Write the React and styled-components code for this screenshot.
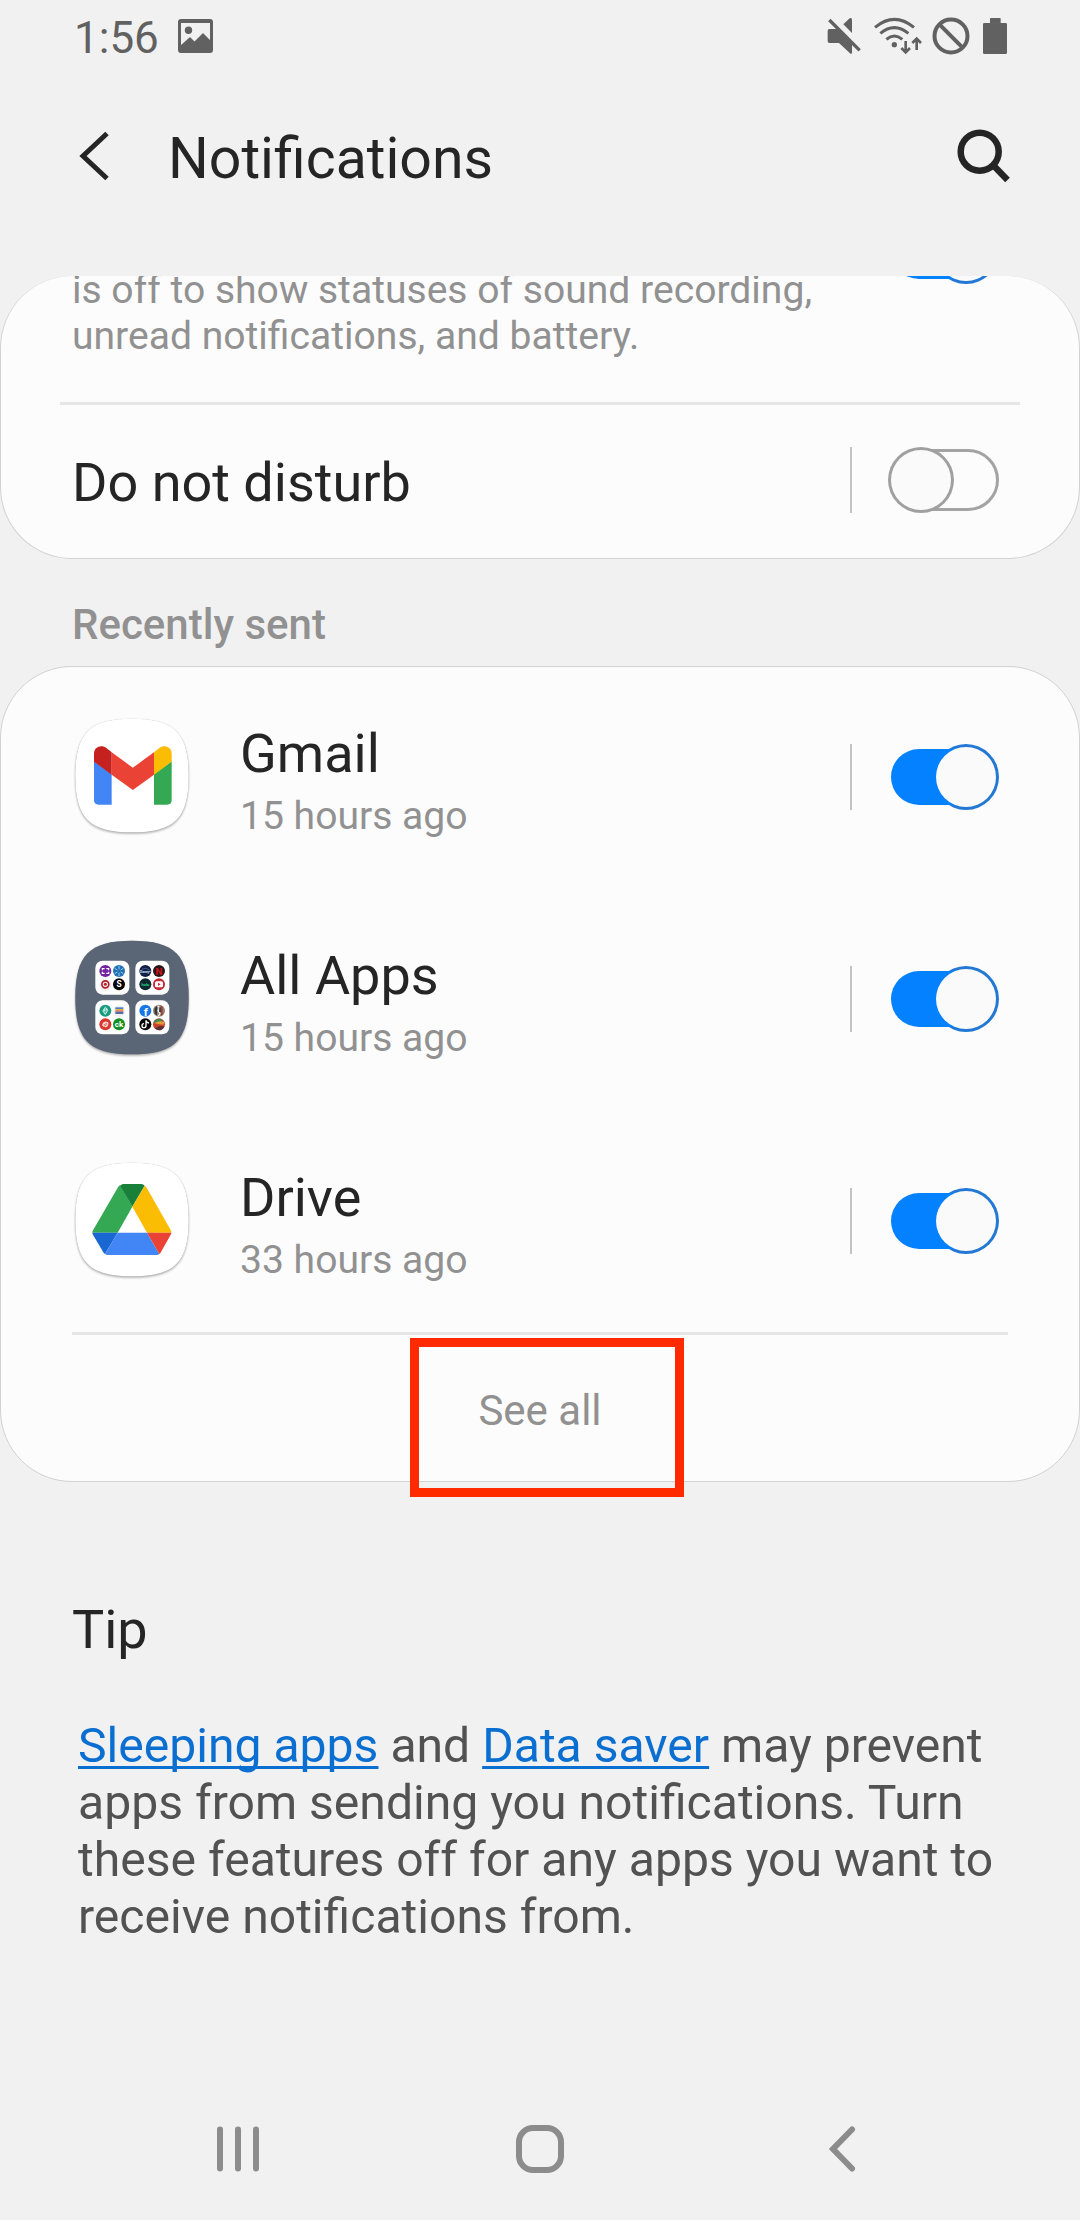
import React from "react";
import styled, { createGlobalStyle } from "styled-components";

const GlobalStyle = createGlobalStyle`
  * { box-sizing: border-box; }
  body { margin: 0; background: #f1f1f1; }
`;

const Screen = styled.div`
  display: flex;
  flex-direction: column;
  width: 1080px;
  height: 2220px;
  overflow: hidden;
  background: #f1f1f1;
  color: #252525;
  font-family: Roboto, "Liberation Sans", sans-serif;
`;

const StatusBar = styled.header`
  display: flex;
  align-items: center;
  justify-content: space-between;
  height: 72px;
  padding: 0 72px 0 74px;
  color: #616161;
`;

const StatusLeft = styled.div`
  display: flex;
  align-items: center;
  gap: 19px;
`;

const Clock = styled.span`
  font-size: 44px;
  line-height: 52px;
  padding-top: 4px;
`;

const StatusIcons = styled.div`
  display: flex;
  align-items: center;
`;

const Icon = styled.svg`
  display: block;
  flex: none;
  overflow: visible;
  margin-left: ${(p) => p.$gap || 0}px;
`;

const TitleBar = styled.div`
  display: flex;
  align-items: center;
  height: 168px;
  padding: 0 69px 0 78px;
`;

const Title = styled.h1`
  flex: 1;
  margin: 0 0 0 58px;
  font-size: 57.2px;
  font-weight: 400;
  line-height: 68px;
  padding-top: 5px;
`;

const Card = styled.section`
  display: flex;
  flex-direction: column;
  background: #fcfcfc;
  border: 1px solid #d2d2d2;
  border-radius: 72px;
  ${(p) => p.$scrolled && "border-top: 0; margin-top: 36px; overflow: hidden;"}
`;

const Rule = styled.div`
  flex: none;
  height: 3px;
  margin: 0 ${(p) => p.$inset}px;
  background: #e5e5e5;
`;

const ScrolledRow = styled.div`
  display: flex;
  justify-content: space-between;
  height: 126px;
  padding: 0 80px 0 71px;
  overflow: hidden;
`;

const Description = styled.p`
  width: 760px;
  margin: -9px 0 0;
  font-size: 39.1px;
  line-height: 46px;
  color: #919191;
`;

const ScrolledSwitch = styled.div`
  margin-top: -58px;
`;

const Row = styled.div`
  display: flex;
  align-items: center;
  height: ${(p) => p.$height}px;
  padding: 0 80px ${(p) => p.$lift || 0}px ${(p) => p.$left || 71}px;
`;

const Label = styled.div`
  flex: 1;
  font-size: 54px;
  line-height: 64px;
  padding-top: ${(p) => p.$drop || 0}px;
`;

const AppText = styled.div`
  display: flex;
  flex: 1;
  flex-direction: column;
  gap: 7px;
  margin-left: 51px;
  padding-top: 7px;
`;

const AppName = styled.div`
  font-size: 54px;
  line-height: 64px;
`;

const AppTime = styled.div`
  font-size: 39.1px;
  line-height: 46px;
  color: #919191;
`;

const Separator = styled.div`
  width: 2px;
  height: 66px;
  margin-right: 36px;
  background: #c3c3c3;
`;

const Toggle = styled.div`
  position: relative;
  width: 111px;
  height: 66px;
`;

const Track = styled.div`
  position: absolute;
  ${(p) =>
    p.$on
      ? "left: 3px; top: 5px; width: 76px; height: 56px; border-radius: 28px 0 0 28px; background: #0381fe;"
      : "left: 12px; top: 2px; width: 99px; height: 62px; border-radius: 31px; border: 3px solid #a3a3a3;"}
`;

const Ring = styled.div`
  position: absolute;
  top: 0;
  left: ${(p) => (p.$on ? 45 : 0)}px;
  width: 66px;
  height: 66px;
  border-radius: 50%;
  background: ${(p) => (p.$on ? "#2278d4" : "#a0a0a0")};
`;

const Knob = styled.div`
  position: absolute;
  top: 3px;
  left: ${(p) => (p.$on ? 48 : 3)}px;
  width: 60px;
  height: 60px;
  border-radius: 50%;
  background: #fafafa;
`;

const SectionTitle = styled.h2`
  margin: 0;
  height: 107px;
  padding: 41px 0 0 72px;
  font-size: 42px;
  font-weight: 500;
  line-height: 50px;
  color: #919191;
`;

const SeeAll = styled.div`
  position: relative;
  display: flex;
  justify-content: center;
  height: 146px;
  padding-top: 51px;
  font-size: 42px;
  line-height: 50px;
  color: #919191;
`;

const Highlight = styled.div`
  position: absolute;
  left: 409px;
  top: 3px;
  width: 274px;
  height: 159px;
  border: 9px solid #ff2a00;
`;

const Tip = styled.section`
  flex: 1;
  padding: 116px 72px 0;
`;

const TipTitle = styled.h2`
  margin: 0;
  font-size: 54px;
  font-weight: 400;
  line-height: 64px;
`;

const TipText = styled.p`
  margin: 55px 0 0;
  padding-left: 6px;
  font-size: 48.1px;
  line-height: 57px;
  white-space: nowrap;
  color: #525252;
`;

const TipLink = styled.a`
  color: #0a6fd1;
  text-decoration: underline;
  text-decoration-thickness: 3px;
  text-underline-offset: 4px;
  text-decoration-skip-ink: none;
`;

const NavBar = styled.nav`
  display: flex;
  align-items: center;
  height: 144px;
  padding: 2px 0 0 214px;
`;

const SQUIRCLE =
  "M171 -1C299 -1 341 42 341 170C341 298 299 340 171 340C43 340 1 298 1 170C1 42 43 -1 171 -1Z";

const AppIconSvg = styled.svg`
  display: block;
  flex: none;
  width: 114px;
  height: 114px;
  margin-top: -2px;
  overflow: visible;
`;

const Plate = styled.path`
  filter: drop-shadow(0 4px 3px rgba(0, 0, 0, 0.28)) drop-shadow(0 0 1px rgba(0, 0, 0, 0.25));
`;

function GmailIcon() {
  return (
    <AppIconSvg viewBox="0 0 342 342">
      <Plate d={SQUIRCLE} fill="#fff" />
      <g transform="translate(-45 -57)">
        <path d="M102 184L155 223V314H116Q102 314 102 300Z" fill="#4285f4" />
        <path d="M335 184L282 223V314H321Q335 314 335 300Z" fill="#34a853" />
        <path d="M155 157L218.500 203L282 157V224L218.500 270L155 224Z" fill="#ea4335" />
        <path d="M102 185V161C102 141 124 132 140 145L155 157V224Z" fill="#c5221f" />
        <path d="M335 185V161C335 141 313 132 297 145L282 157V224Z" fill="#fbbc04" />
      </g>
    </AppIconSvg>
  );
}

function DriveIcon() {
  return (
    <AppIconSvg viewBox="0 0 342 342">
      <Plate d={SQUIRCLE} fill="#fff" />
      <g transform="translate(-45 -69)">
        <path d="M180 136L217 200L173 278H97Q97 274 99 271L174 142Q177 137 180 136Z" fill="#34a853" />
        <path d="M180 137Q185 132 190 132H244Q250 132 254 137L217 200Z" fill="#188038" />
        <path d="M254 137Q257 138 260 143L332 270Q334 274 334 278H261L217 200Z" fill="#fbbc04" />
        <path d="M97 278H173L135 342Q132 340 129 335L99 284Q97 281 97 278Z" fill="#1967d2" />
        <path d="M173 278H261L298 342Q294 345 290 345H143Q139 345 135 342Z" fill="#4285f4" />
        <path d="M261 278H334Q334 281 332 284L303 336Q301 340 298 342Z" fill="#ea4335" />
      </g>
    </AppIconSvg>
  );
}

const MiniText = styled.text`
  font-family: Roboto, sans-serif;
  font-weight: 700;
  text-anchor: middle;
`;

function AllAppsIcon() {
  return (
    <AppIconSvg viewBox="0 0 342 342">
      <Plate d={SQUIRCLE} fill="#5a6575" />
      <g transform="translate(-45 -63)">
        {[[106, 122], [226, 122], [106, 241], [226, 241]].map(([x, y]) => (
          <rect key={`${x}-${y}`} x={x} y={y} width="102" height="102" rx="22" fill="#fff" />
        ))}
        <circle cx="136" cy="153" r="18" fill="#7423a0" />
        <path d="M134 146H127V151M139 146H146V151M134 160H127V155M139 160H146V155" fill="none" stroke="#fff" strokeWidth="3.500" />
        <circle cx="177" cy="153" r="18" fill="#2470b5" />
        <path d="M177 138V148M177 158V168M164 145L172 150M182 156L190 161M190 145L182 150M172 156L164 161" stroke="#8fd0ee" strokeWidth="3" />
        <circle cx="136" cy="195" r="18" fill="#f3eeee" />
        <circle cx="136" cy="193" r="10.500" fill="none" stroke="#b3202b" strokeWidth="5" />
        <circle cx="136" cy="193" r="4.500" fill="#b3202b" />
        <circle cx="177" cy="193" r="18" fill="#050505" />
        <MiniText x="177" y="202" fontSize="25" fill="#fff">S</MiniText>

        <circle cx="256" cy="153" r="18" fill="#101d45" />
        <path d="M245 148Q257 140 268 150" fill="none" stroke="#5a78b0" strokeWidth="2" />
        <MiniText x="256" y="158" fontSize="9" fill="#dce5ff">Disney+</MiniText>
        <circle cx="297" cy="153" r="18" fill="#27171a" />
        <MiniText x="297" y="164" fontSize="29" fill="#d4141d">N</MiniText>
        <circle cx="256" cy="193" r="18" fill="#0d2830" />
        <MiniText x="256" y="197" fontSize="12" fill="#2fd68a">hulu</MiniText>
        <circle cx="297" cy="193" r="18" fill="#c62a36" />
        <rect x="285" y="184" width="24" height="18" rx="5" fill="#fff" />
        <path d="M294 188L302 193L294 198Z" fill="#c62a36" />

        <circle cx="136" cy="272" r="18" fill="#159b7f" />
        <path d="M136 259L145 271L136 285L127 273Z" fill="#d8f5eb" />
        <path d="M136 262V280M130 273L136 277L142 270" fill="none" stroke="#159b7f" strokeWidth="2" />
        <circle cx="178" cy="273" r="18" fill="#f1f1f5" />
        <path d="M166 262H190V267H166Z" fill="#4a7ec0" />
        <path d="M166 267H190V271H166Z" fill="#e6b53c" />
        <path d="M166 271H190V275H166Z" fill="#d9653f" />
        <path d="M166 275H190V282H166Z" fill="#596ca8" />
        <circle cx="136" cy="313" r="18" fill="#d9352c" />
        <path d="M127 312Q131 301 144 306Q148 315 140 321Q131 324 127 316Z" fill="#fbdcd8" />
        <path d="M131 315L141 309M132 319L142 313" stroke="#d9352c" strokeWidth="2" />
        <circle cx="177" cy="313" r="18" fill="#148f22" />
        <MiniText x="177" y="321" fontSize="24" fill="#fff">ck</MiniText>

        <circle cx="256" cy="272" r="18" fill="#1877e6" />
        <MiniText x="257" y="288" fontSize="34" fill="#fff">f</MiniText>
        <circle cx="297" cy="272" r="18" fill="#8f8478" />
        <path d="M284 264L291 258V286L284 281Z" fill="#313a3b" />
        <path d="M293 257L299 263L294 272L300 280L295 289" fill="none" stroke="#f2eee8" strokeWidth="4" />
        <path d="M302 256L308 262V284L303 288Z" fill="#a33f35" />
        <path d="M300 262V276" stroke="#22282a" strokeWidth="4" />
        <circle cx="256" cy="313" r="18" fill="#060606" />
        <path d="M258 301V317A6 6 0 1 1 252 311M258 301Q260 308 267 309" fill="none" stroke="#fff" strokeWidth="4" />
        <circle cx="297" cy="313" r="18" fill="#c8432b" />
        <path d="M281 306Q289 294 303 297L309 301L291 312Z" fill="#3f8a50" />
        <path d="M284 309Q298 300 313 306L310 314L292 312Z" fill="#e59a3b" />
        <path d="M285 325Q299 315 313 320Q307 331 297 331Q290 330 285 325Z" fill="#5a2f38" />
      </g>
    </AppIconSvg>
  );
}

function Switch({ on }) {
  return (
    <Toggle role="switch" aria-checked={!!on}>
      {on ? (
        <>
          <Ring $on />
          <Track $on />
          <Knob $on />
        </>
      ) : (
        <>
          <Track />
          <Ring />
          <Knob />
        </>
      )}
    </Toggle>
  );
}

const apps = [
  { name: "Gmail", time: "15 hours ago", Logo: GmailIcon },
  { name: "All Apps", time: "15 hours ago", Logo: AllAppsIcon },
  { name: "Drive", time: "33 hours ago", Logo: DriveIcon },
];

function StatusRight() {
  return (
    <StatusIcons>
      <Icon width="35" height="38" viewBox="141 51 105 114">
        <path d="M143 92Q143 87 148 87H170L216 133V158Q216 164 210 160L177 129H148Q143 129 143 124Z" fill="#616161" />
        <path d="M148 60L239 151" stroke="#616161" strokeWidth="10" />
        <path d="M190 73L209 55Q216 52 216 59V99Z" fill="#616161" />
      </Icon>
      <Icon $gap={11} width="50" height="38" viewBox="279 51 150 114" fill="none" stroke="#616161">
        <path d="M285 82Q343 34 402 82M301 100Q343 66 385 100M319 118Q343 98 367 118" strokeWidth="9" />
        <circle cx="343" cy="134" r="8" fill="#616161" stroke="none" />
        <path d="M377 123V155M364 144L377 157L390 144M410 150V118M397 129L410 116L423 129" strokeWidth="8" />
      </Icon>
      <Icon $gap={9} width="38" height="38" viewBox="456 51 114 114" fill="none" stroke="#616161" strokeWidth="12">
        <circle cx="513" cy="108" r="49.500" />
        <path d="M479 74L547 142" />
      </Icon>
      <Icon $gap={12} width="26" height="38" viewBox="606 51 78 114" fill="#616161">
        <path d="M632 54H660Q662 54 662 56V69H677Q681 69 681 73V158Q681 162 677 162H613Q609 162 609 158V73Q609 69 613 69H630V56Q630 54 632 54Z" />
      </Icon>
    </StatusIcons>
  );
}

export default function App() {
  return (
    <Screen>
      <GlobalStyle />
      <StatusBar>
        <StatusLeft>
          <Clock>1:56</Clock>
          <Icon width="35" height="34" viewBox="0 0 35 34">
            <path
              fillRule="evenodd"
              fill="#616161"
              d="M3 0H32Q35 0 35 3V31Q35 34 32 34H3Q0 34 0 31V3Q0 0 3 0ZM3 4V26L11.500 18.500Q12 18 12.500 18.500L16.500 22.500L24.500 14.500Q25 14 25.500 14.500L32 21V4Z"
            />
            <circle cx="10.500" cy="11.300" r="3.700" fill="#616161" />
          </Icon>
        </StatusLeft>
        <StatusRight />
      </StatusBar>

      <TitleBar>
        <Icon width="32" height="50" viewBox="0 0 32 50">
          <path d="M29 2.500L5 25L29 47.500" fill="none" stroke="#252525" strokeWidth="5" />
        </Icon>
        <Title>Notifications</Title>
        <Icon width="54" height="54" viewBox="0 0 54 54" fill="none" stroke="#252525" strokeWidth="6.500">
          <circle cx="22.700" cy="22.700" r="19" />
          <path d="M36 36L50.500 51" />
        </Icon>
      </TitleBar>

      <Card $scrolled>
        <ScrolledRow>
          <Description>is off to show statuses of sound recording, unread notifications, and battery.</Description>
          <ScrolledSwitch>
            <Switch on />
          </ScrolledSwitch>
        </ScrolledRow>
        <Rule $inset={59} />
        <Row $height={153} $lift={3}>
          <Label $drop={6}>Do not disturb</Label>
          <Separator />
          <Switch />
        </Row>
      </Card>

      <SectionTitle>Recently sent</SectionTitle>

      <Card>
        {apps.map(({ name, time, Logo }, i) => (
          <Row key={name} $height={i === 0 ? 221 : 222} $lift={i === 0 ? 1 : 0} $left={74}>
            <Logo />
            <AppText>
              <AppName>{name}</AppName>
              <AppTime>{time}</AppTime>
            </AppText>
            <Separator />
            <Switch on />
          </Row>
        ))}
        <Rule $inset={71} />
        <SeeAll>
          See all
          <Highlight />
        </SeeAll>
      </Card>

      <Tip>
        <TipTitle>Tip</TipTitle>
        <TipText>
          <TipLink>Sleeping apps</TipLink> and <TipLink>Data saver</TipLink> may prevent
          <br />
          apps from sending you notifications. Turn
          <br />
          these features off for any apps you want to
          <br />
          receive notifications from.
        </TipText>
      </Tip>

      <NavBar>
        <Icon width="48" height="48" viewBox="0 0 48 48" fill="none" stroke="#8c8c8c" strokeWidth="6" strokeLinecap="round">
          <path d="M6 4.500V43.500M24 4.500V43.500M42 4.500V43.500" />
        </Icon>
        <Icon $gap={254} width="48" height="48" viewBox="0 0 48 48" fill="none" stroke="#8c8c8c" strokeWidth="6">
          <rect x="3" y="3" width="42" height="42" rx="14" />
        </Icon>
        <Icon $gap={262} width="32" height="48" viewBox="0 0 32 48" fill="none" stroke="#8c8c8c" strokeWidth="6" strokeLinecap="round">
          <path d="M26 4.500L7 24L26 43.500" />
        </Icon>
      </NavBar>
    </Screen>
  );
}
